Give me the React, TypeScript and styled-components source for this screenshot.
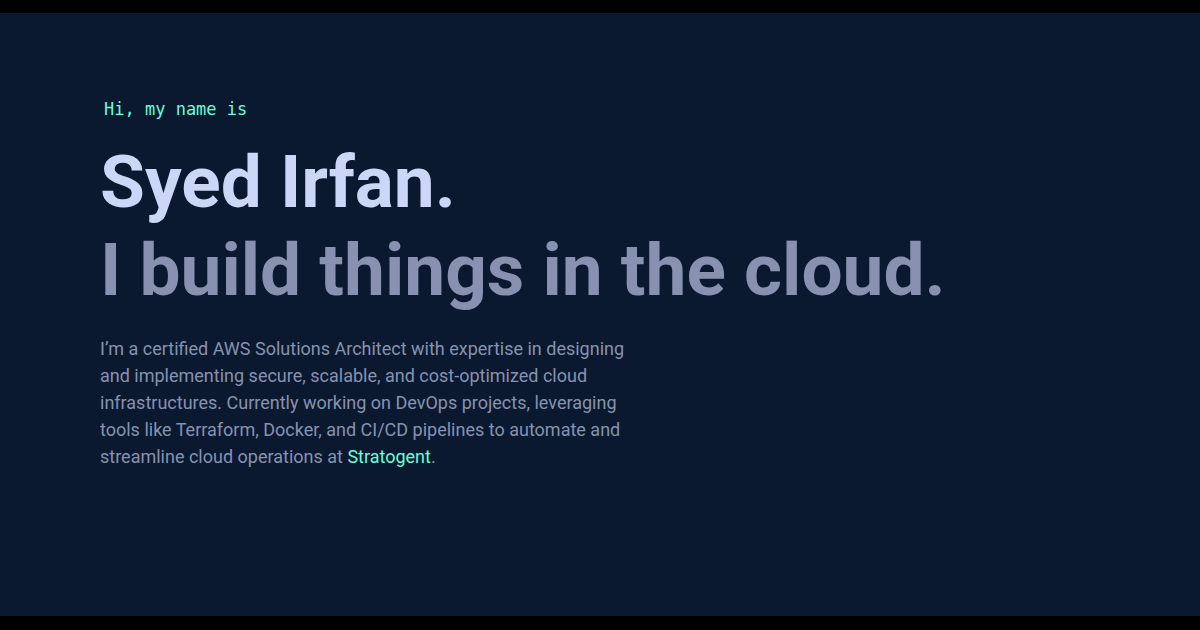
import React from "react";
import styled, { createGlobalStyle } from "styled-components";

const GlobalStyle = createGlobalStyle`
  * { box-sizing: border-box; }
  body { margin: 0; background: #000; }
`;

const Page = styled.main`
  min-height: 100vh;
  padding: 13px 0 14px;
  display: flex;
  background: #000;
`;

const Hero = styled.section`
  flex: 1;
  padding: 84px 100px 100px;
  background: #0a192f;
  color: #8892b0;
  font-family: Roboto, "Liberation Sans", sans-serif;
`;

const Greeting = styled.p`
  margin: 0 0 17px 4px;
  color: #64ffda;
  font-family: "DejaVu Sans Mono", "Liberation Mono", monospace;
  font-size: 17px;
  line-height: 24px;
`;

const Title = styled.h1`
  margin: 0;
  color: #ccd6f6;
  font-size: 73px;
  font-weight: 700;
  line-height: 88px;
`;

const Tagline = styled(Title).attrs({ as: "h2" })`
  color: #8892b0;
`;

const Intro = styled.p`
  max-width: 540px;
  margin: 21px 0 0;
  font-size: 18px;
  line-height: 27px;
`;

const Employer = styled.a`
  color: #64ffda;
  text-decoration: none;
`;

export default function App() {
  return (
    <>
      <GlobalStyle />
      <Page>
        <Hero>
          <Greeting>Hi, my name is</Greeting>
          <Title>Syed Irfan.</Title>
          <Tagline>I build things in the cloud.</Tagline>
          <Intro>
            I’m a certified AWS Solutions Architect with expertise in designing
            <br />
            and implementing secure, scalable, and cost-optimized cloud
            <br />
            infrastructures. Currently working on DevOps projects, leveraging
            <br />
            tools like Terraform, Docker, and CI/CD pipelines to automate and
            <br />
            streamline cloud operations at <Employer href="#stratogent">Stratogent</Employer>.
          </Intro>
        </Hero>
      </Page>
    </>
  );
}
